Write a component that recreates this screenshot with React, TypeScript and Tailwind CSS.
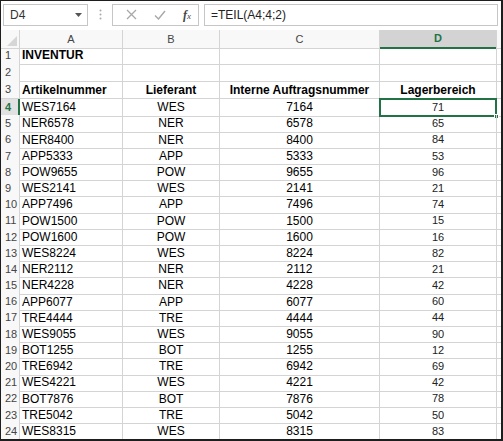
import React from "react";

const rows: [string, string, string, string][] = [
  ["WES7164", "WES", "7164", "71"],
  ["NER6578", "NER", "6578", "65"],
  ["NER8400", "NER", "8400", "84"],
  ["APP5333", "APP", "5333", "53"],
  ["POW9655", "POW", "9655", "96"],
  ["WES2141", "WES", "2141", "21"],
  ["APP7496", "APP", "7496", "74"],
  ["POW1500", "POW", "1500", "15"],
  ["POW1600", "POW", "1600", "16"],
  ["WES8224", "WES", "8224", "82"],
  ["NER2112", "NER", "2112", "21"],
  ["NER4228", "NER", "4228", "42"],
  ["APP6077", "APP", "6077", "60"],
  ["TRE4444", "TRE", "4444", "44"],
  ["WES9055", "WES", "9055", "90"],
  ["BOT1255", "BOT", "1255", "12"],
  ["TRE6942", "TRE", "6942", "69"],
  ["WES4221", "WES", "4221", "42"],
  ["BOT7876", "BOT", "7876", "78"],
  ["TRE5042", "TRE", "5042", "50"],
  ["WES8315", "WES", "8315", "83"],
];

const cols = "grid grid-cols-[19px_103px_97px_160px_117px_1fr]";
const cell = "border-r border-b border-[#d4d4d4] flex items-center overflow-hidden whitespace-nowrap";
const rowHead =
  "border-r border-b border-[#d4d4d4] bg-[#f8f8f8] text-[11px] text-[#444] pl-[4px] flex items-center";

function RowNum({ n, active }: { n: number; active?: boolean }) {
  if (active) {
    return (
      <div className="border-b border-[#d4d4d4] border-r-2 border-r-[#217346] bg-[#e1e1e1] text-[11px] text-[#217346] font-bold pl-[4px] flex items-center">
        {n}
      </div>
    );
  }
  return <div className={rowHead}>{n}</div>;
}

export default function App() {
  return (
    <div
      className="w-[503px] h-[441px] overflow-hidden bg-white border-t border-l border-r-2 border-b-2 border-[#1e1e1e] flex flex-col"
      style={{ fontFamily: '"Liberation Sans", Arial, sans-serif' }}
    >
      {/* Formula bar */}
      <div className="h-[27px] flex items-center gap-0 pl-[2px] pr-[3px] bg-white shrink-0">
        <div className="w-[85px] h-[22px] border border-[#c6c6c6] flex items-center justify-between pl-[6px] pr-[5px] text-[12px] text-[#333]">
          <span>D4</span>
          <svg width="7" height="4" viewBox="0 0 7 4">
            <path d="M0 0h7L3.5 4z" fill="#555" />
          </svg>
        </div>
        <div className="w-[24px] flex justify-center">
          <svg width="3" height="11" viewBox="0 0 3 11">
            <circle cx="1.5" cy="1.5" r="1" fill="#aaa" />
            <circle cx="1.5" cy="5.5" r="1" fill="#aaa" />
            <circle cx="1.5" cy="9.5" r="1" fill="#aaa" />
          </svg>
        </div>
        <div className="w-[87px] h-[22px] border border-[#c6c6c6] flex items-center pl-[13px] gap-[17px]">
          <svg width="11" height="11" viewBox="0 0 11 11">
            <path d="M1 1l9 9M10 1l-9 9" stroke="#a8a8a8" strokeWidth="1.3" />
          </svg>
          <svg width="12" height="10" viewBox="0 0 12 10">
            <path d="M1 5.5l3.5 3.5L11 1" stroke="#a8a8a8" strokeWidth="1.4" fill="none" />
          </svg>
          <span
            className="text-[12px] italic text-[#444] leading-none"
            style={{ fontFamily: '"Liberation Serif", serif' }}
          >
            <span className="font-bold">f</span>
            <span className="text-[9px]">x</span>
          </span>
        </div>
        <div className="w-[5px]" />
        <div className="flex-1 h-[22px] border border-[#c6c6c6] flex items-center pl-[6px] text-[12px] text-[#222]">
          =TEIL(A4;4;2)
        </div>
      </div>

      <div className="h-[2px] shrink-0" />

      {/* Sheet */}
      <div className="flex-1 flex flex-col overflow-hidden">
        {/* Column headers */}
        <div className={`${cols} h-[17px] shrink-0`}>
          <div className="border-r border-b border-[#d4d4d4] bg-[#f8f8f8] relative">
            <svg className="absolute right-[2px] bottom-[2px]" width="10" height="10" viewBox="0 0 10 10">
              <path d="M10 0v10H0z" fill="#d6d6d6" />
            </svg>
          </div>
          {["A", "B", "C"].map((c) => (
            <div
              key={c}
              className="border-r border-b border-[#d4d4d4] bg-[#f8f8f8] flex items-center justify-center text-[11px] text-[#444]"
            >
              {c}
            </div>
          ))}
          <div className="border-r border-[#d4d4d4] border-b-2 border-b-[#217346] bg-[#d3d3d3] flex items-center justify-center text-[11px] font-bold text-[#217346]">
            D
          </div>
          <div className="border-b border-[#d4d4d4] bg-[#f8f8f8]" />
        </div>

        {/* Row 1 */}
        <div className={`${cols} h-[17px] shrink-0`}>
          <RowNum n={1} />
          <div className={`${cell} pl-[2px] text-[12px] font-bold text-black`}>INVENTUR</div>
          <div className={cell} />
          <div className={cell} />
          <div className={cell} />
          <div className={`${cell} border-r-0`} />
        </div>

        {/* Row 2 */}
        <div className={`${cols} h-[17px] shrink-0`}>
          <RowNum n={2} />
          <div className={cell} />
          <div className={cell} />
          <div className={cell} />
          <div className={cell} />
          <div className={`${cell} border-r-0`} />
        </div>

        {/* Row 3 headers */}
        <div className={`${cols} h-[18px] shrink-0`}>
          <RowNum n={3} />
          <div className={`${cell} pl-[2px] text-[12px] font-bold text-black`}>Artikelnummer</div>
          <div className={`${cell} justify-center text-[12px] font-bold text-black`}>Lieferant</div>
          <div className={`${cell} justify-center text-[12px] font-bold text-black`}>Interne Auftragsnummer</div>
          <div className={`${cell} justify-center text-[12px] font-bold text-black`}>Lagerbereich</div>
          <div className={`${cell} border-r-0`} />
        </div>

        {/* Data */}
        {rows.map(([art, lief, nr, lager], i) => {
          const n = i + 4;
          const active = n === 4;
          return (
            <div key={n} className={`${cols} h-[16.2px] shrink-0`}>
              <RowNum n={n} active={active} />
              <div className={`${cell} pl-[2px] text-[12px] text-black`}>{art}</div>
              <div className={`${cell} justify-center text-[12px] text-black`}>{lief}</div>
              <div className={`${cell} justify-center text-[12px] text-black`}>{nr}</div>
              <div className={`${cell} justify-center text-[11px] text-[#222] relative overflow-visible`}>
                {lager}
                {active && (
                  <div className="absolute -left-[1px] -top-[1px] -right-[1px] -bottom-[1px] border-2 border-[#217346]">
                    <div className="absolute -right-[4px] -bottom-[4px] w-[5px] h-[5px] bg-[#217346] border border-white" />
                  </div>
                )}
              </div>
              <div className={`${cell} border-r-0`} />
            </div>
          );
        })}
      </div>
    </div>
  );
}
